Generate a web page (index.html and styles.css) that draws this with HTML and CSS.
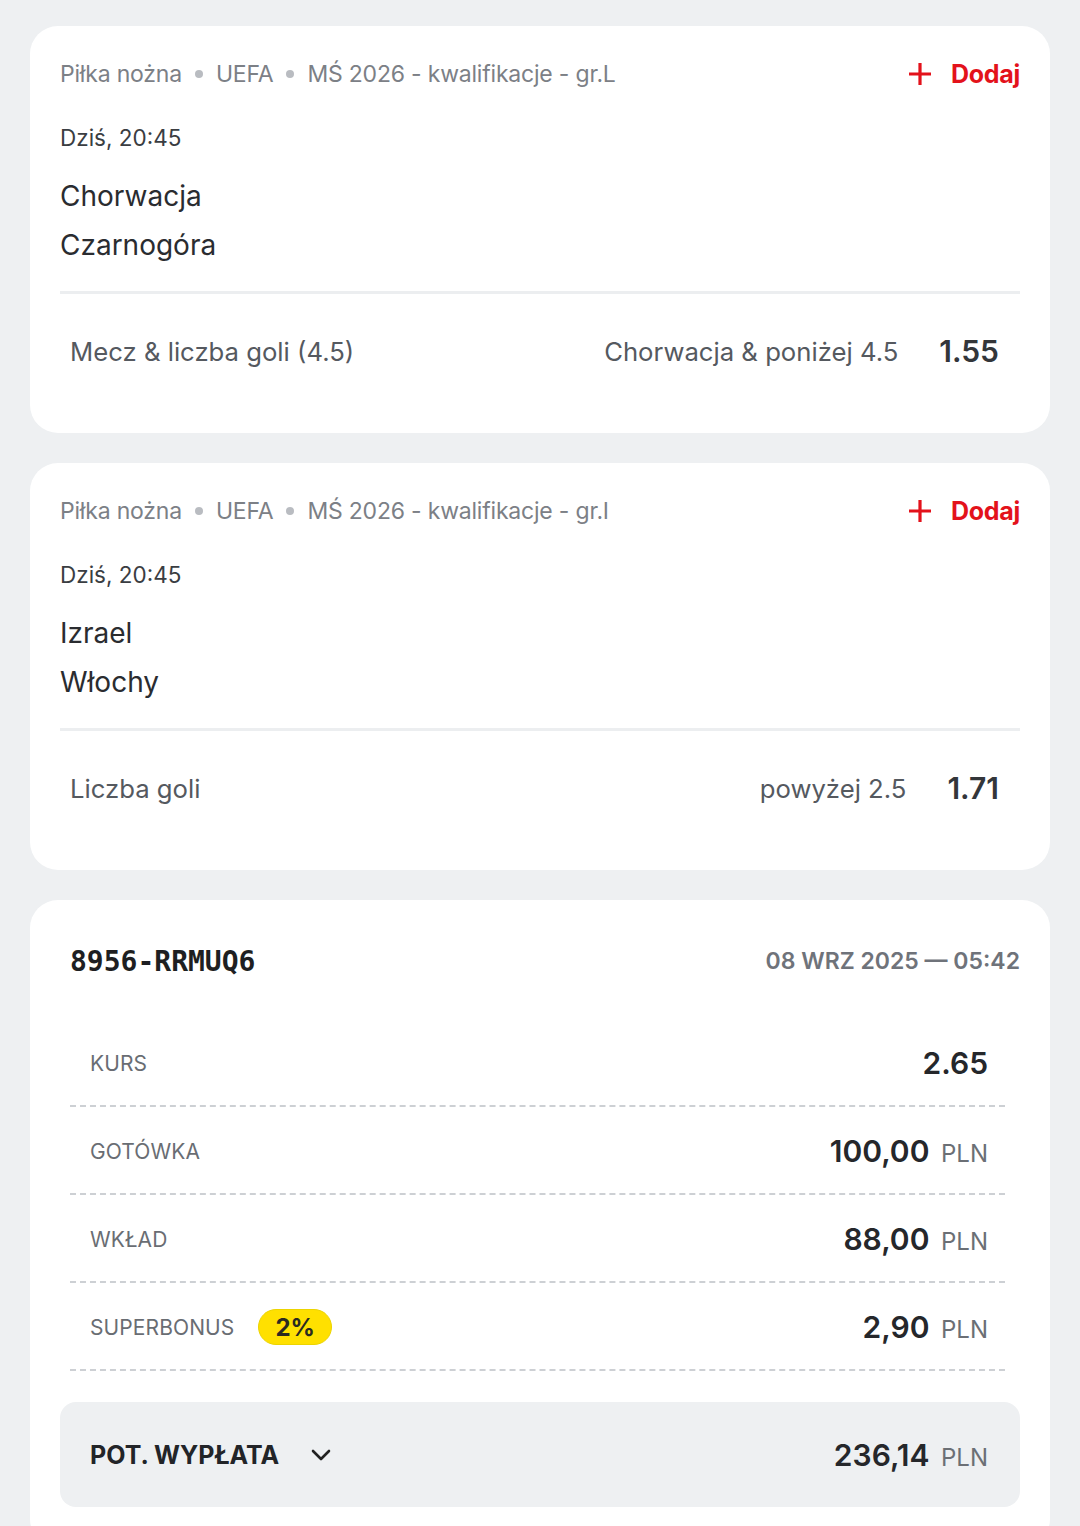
FILE: index.html
```html
<!DOCTYPE html>
<html lang="pl">
<head>
<meta charset="utf-8">
<link rel="stylesheet" href="styles.css">
</head>
<body>
<div class="page">
  <section class="card event">
    <div class="event-head">
      <div class="crumbs">
        <span>Piłka nożna</span><span class="dot"></span><span>UEFA</span><span class="dot"></span><span>MŚ 2026 - kwalifikacje - gr.L</span>
      </div>
      <div class="add">
        <svg class="plus" viewBox="0 0 24 24" width="24" height="24"><path d="M12 1v22M1 12h22" stroke="#e3121b" stroke-width="3.2" fill="none"/></svg>
        <span>Dodaj</span>
      </div>
    </div>
    <div class="time">Dziś, 20:45</div>
    <div class="teams">
      <div>Chorwacja</div>
      <div>Czarnogóra</div>
    </div>
    <div class="divider"></div>
    <div class="pick">
      <span class="market">Mecz &amp; liczba goli (4.5)</span>
      <span class="selection">Chorwacja &amp; poniżej 4.5</span>
      <span class="odd">1.55</span>
    </div>
  </section>

  <section class="card event">
    <div class="event-head">
      <div class="crumbs">
        <span>Piłka nożna</span><span class="dot"></span><span>UEFA</span><span class="dot"></span><span>MŚ 2026 - kwalifikacje - gr.I</span>
      </div>
      <div class="add">
        <svg class="plus" viewBox="0 0 24 24" width="24" height="24"><path d="M12 1v22M1 12h22" stroke="#e3121b" stroke-width="3.2" fill="none"/></svg>
        <span>Dodaj</span>
      </div>
    </div>
    <div class="time">Dziś, 20:45</div>
    <div class="teams">
      <div>Izrael</div>
      <div>Włochy</div>
    </div>
    <div class="divider"></div>
    <div class="pick">
      <span class="market">Liczba goli</span>
      <span class="selection">powyżej 2.5</span>
      <span class="odd">1.71</span>
    </div>
  </section>

  <section class="card summary">
    <div class="summary-head">
      <span class="code">8956-RRMUQ6</span>
      <span class="date">08 WRZ 2025 — 05:42</span>
    </div>
    <div class="rows">
      <div class="row">
        <span class="label">KURS</span>
        <span class="value">2.65</span>
      </div>
      <div class="row">
        <span class="label">GOTÓWKA</span>
        <span class="value">100,00 <small>PLN</small></span>
      </div>
      <div class="row">
        <span class="label">WKŁAD</span>
        <span class="value">88,00 <small>PLN</small></span>
      </div>
      <div class="row">
        <span class="label">SUPERBONUS <span class="badge">2%</span></span>
        <span class="value">2,90 <small>PLN</small></span>
      </div>
    </div>
    <div class="payout">
      <span class="payout-label">POT. WYPŁATA
        <svg class="chev" viewBox="0 0 20 12" width="20" height="12"><path d="M2 2l8 8 8-8" stroke="#222" stroke-width="2.6" fill="none" stroke-linecap="round" stroke-linejoin="round"/></svg>
      </span>
      <span class="value">236,14 <small>PLN</small></span>
    </div>
  </section>
</div>
</body>
</html>
```
FILE: styles.css
```css
* { box-sizing: border-box; }
html, body { margin: 0; padding: 0; }
body {
  background: #eef0f2;
  font-family: Inter, "Noto Sans", "Liberation Sans", sans-serif;
  color: #222;
  width: 1080px;
  height: 1526px;
  overflow: hidden;
}
.page {
  padding: 26px 30px 0 30px;
  display: flex;
  flex-direction: column;
  gap: 30px;
}
.card {
  background: #fff;
  border-radius: 28px;
}
.event {
  padding: 32px 30px 53px 30px;
  height: 407px;
}
.event-head {
  display: flex;
  justify-content: space-between;
  align-items: center;
  height: 32px;
}
.crumbs {
  display: flex;
  align-items: center;
  font-size: 23px;
  color: #7c8086;
  letter-spacing: -0.2px;
}
.dot {
  width: 8px;
  height: 8px;
  border-radius: 50%;
  background: #b9bcc1;
  margin: 0 13px;
}
.add {
  display: flex;
  align-items: center;
  gap: 19px;
  color: #e3121b;
  font-size: 25px;
  font-weight: 700;
  letter-spacing: -0.3px;
}
.plus { display: block; }
.time {
  margin-top: 32px;
  height: 32px;
  line-height: 32px;
  font-size: 22.5px;
  color: #3a3d42;
}
.teams {
  margin-top: 18px;
  font-size: 28px;
  line-height: 49px;
  color: #2a2c30;
}
.divider {
  margin-top: 21px;
  height: 3px;
  background: #eceef0;
}
.pick {
  margin-top: 27px;
  height: 60px;
  display: flex;
  align-items: center;
  padding: 0 21px 0 10px;
}
.market {
  flex: 1;
  font-size: 25.7px;
  color: #55595f;
}
.selection {
  font-size: 25.7px;
  color: #55595f;
}
.odd {
  margin-left: 41px;
  font-size: 30px;
  font-weight: 600;
  color: #33363a;
}

.summary {
  padding: 41px 30px 40px 30px;
}
.summary-head {
  height: 40px;
  display: flex;
  justify-content: space-between;
  align-items: center;
  padding-left: 10px;
}
.code {
  font-family: "DejaVu Sans Mono", "Liberation Mono", monospace;
  font-weight: 700;
  font-size: 28px;
  color: #1e1f22;
}
.date {
  font-size: 23px;
  font-weight: 600;
  color: #6f737a;
}
.rows {
  margin: 38px 15px 0 10px;
}
.row {
  height: 88px;
  border-bottom: 2px dashed #cdd0d4;
  display: flex;
  justify-content: space-between;
  align-items: center;
  padding: 2px 17px 0 20px;
}
.label {
  display: flex;
  align-items: center;
  font-size: 21px;
  color: #696d73;
  letter-spacing: 0.1px;
}
.badge {
  margin-left: 24px;
  background: #ffe000;
  color: #2a2a20;
  font-size: 24px;
  font-weight: 700;
  border-radius: 18px;
  height: 36px;
  padding: 0 16px;
  display: inline-flex;
  align-items: center;
  border: 1px solid #ecd400;
}
.value {
  font-size: 30px;
  font-weight: 600;
  color: #25272b;
}
.value small {
  font-size: 24px;
  font-weight: 400;
  color: #6b6f75;
  margin-left: 4px;
}
.payout {
  margin-top: 31px;
  height: 105px;
  background: #eef0f2;
  border-radius: 16px;
  display: flex;
  justify-content: space-between;
  align-items: center;
  padding: 0 32px 0 30px;
}
.payout-label {
  display: flex;
  align-items: center;
  font-size: 25px;
  font-weight: 700;
  color: #222428;
  gap: 32px;
}
.chev { display: block; }
```
